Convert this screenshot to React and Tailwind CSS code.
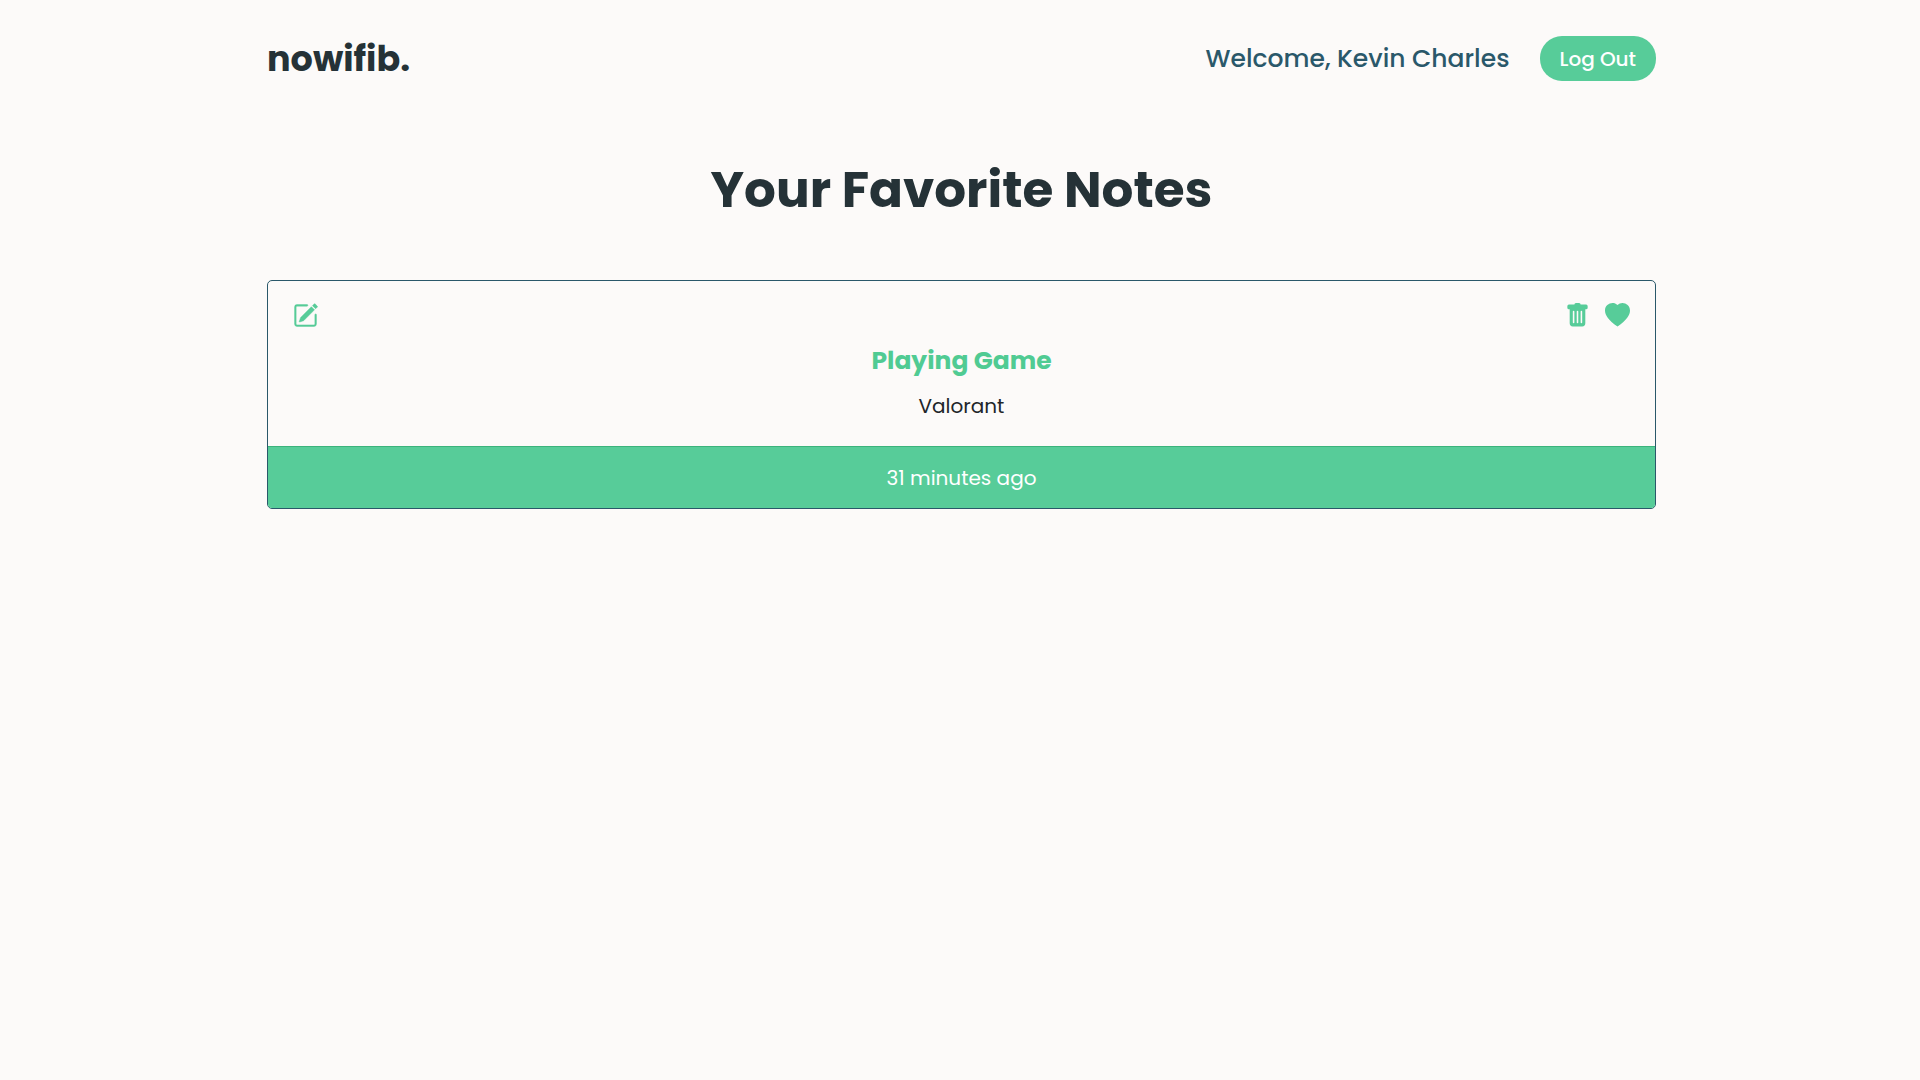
import { BsPencilSquare, BsTrashFill, BsHeartFill } from "react-icons/bs";

function Header() {
  return (
    <header className="flex items-center justify-between pt-9">
      <a href="#home" className="text-[35px] leading-[45px] font-bold text-[#253237]">
        nowifib.
      </a>
      <div className="flex items-center gap-[30px]">
        <p className="text-[25px] leading-8 font-medium text-[#2a586a]">Welcome, Kevin Charles</p>
        <button
          type="button"
          className="h-[45px] rounded-[22px] bg-[#57cc99] px-5 text-[20px] font-medium text-white"
        >
          Log Out
        </button>
      </div>
    </header>
  );
}

function NoteCard({ title, body, time }) {
  return (
    <article className="overflow-hidden rounded-[5px] border border-[#2a586a] text-center">
      <div className="px-[25px] pt-[22px] pb-[25px]">
        <div className="flex justify-between text-[25px] text-[#57cc99]">
          <button type="button" aria-label="Edit note">
            <BsPencilSquare className="stroke-current [stroke-width:0.3]" />
          </button>
          <div className="flex gap-[15px]">
            <button type="button" aria-label="Delete note">
              <BsTrashFill />
            </button>
            <button type="button" aria-label="Remove from favorites">
              <BsHeartFill />
            </button>
          </div>
        </div>
        <h2 className="mt-[18px] text-[25px] leading-[30px] font-bold text-[#50cb93]">{title}</h2>
        <p className="mt-[15px] text-[20px] leading-[30px] text-[#212529]">{body}</p>
      </div>
      <footer className="border-t border-[#3bb37c] bg-[#57cc99] pt-4 pb-[15px] text-[20px] leading-[30px] text-white">
        {time}
      </footer>
    </article>
  );
}

export default function App() {
  return (
    <div className="min-h-screen bg-[#fcfaf9] pl-[3px] font-['Poppins','Inter',sans-serif]">
      <div className="mx-auto max-w-[1389px]">
        <Header />
        <main>
          <h1 className="mt-[79px] mb-[60px] text-center text-[50px] leading-[60px] font-bold text-[#253237]">
            Your Favorite Notes
          </h1>
          <NoteCard title="Playing Game" body="Valorant" time="31 minutes ago" />
        </main>
      </div>
    </div>
  );
}
